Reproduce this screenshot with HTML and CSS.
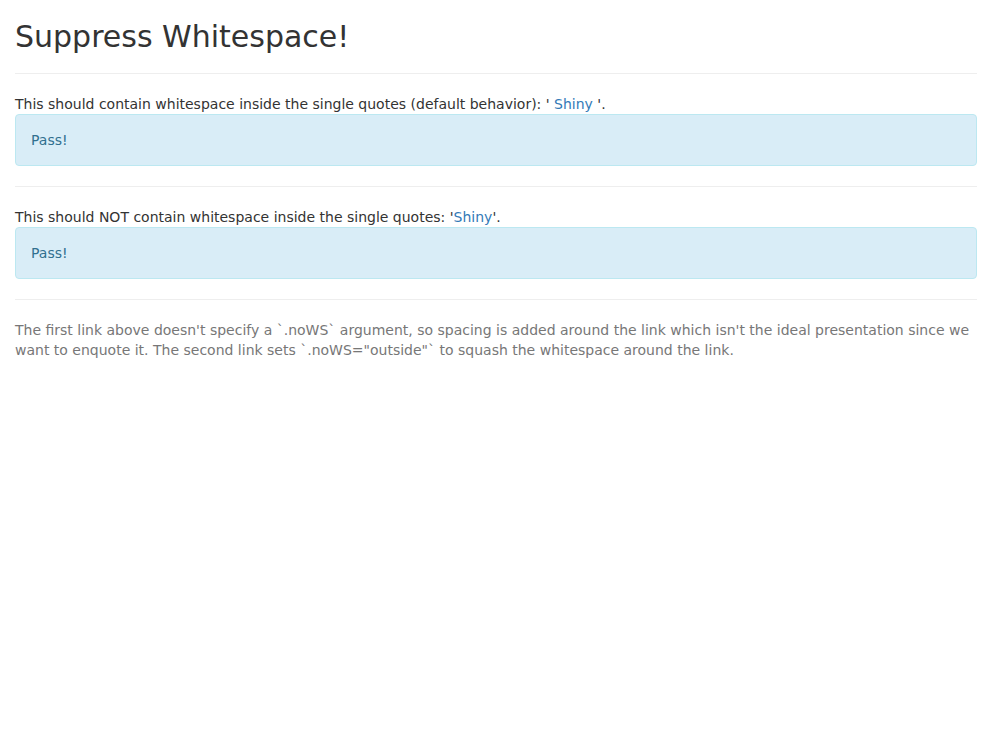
FILE: index.html
```html
<!DOCTYPE html>
<html>
<head>
<meta charset="utf-8">
<title>Suppress Whitespace!</title>
<link rel="stylesheet" href="styles.css">
</head>
<body>
<div class="container">
  <h2 class="title">Suppress Whitespace!</h2>
  <hr class="rule">
  <div class="line">This should contain whitespace inside the single quotes (default behavior): ' <a class="link" href="#">Shiny</a> '.</div>
  <div class="alert">Pass!</div>
  <hr class="rule">
  <div class="line">This should NOT contain whitespace inside the single quotes: '<a class="link" href="#">Shiny</a>'.</div>
  <div class="alert">Pass!</div>
  <hr class="rule">
  <p class="muted">The first link above doesn't specify a `.noWS` argument, so spacing is added around the link which isn't the ideal presentation since we want to enquote it. The second link sets `.noWS="outside"` to squash the whitespace around the link.</p>
</div>
</body>
</html>
```
FILE: styles.css
```css
html, body {
  margin: 0;
  padding: 0;
  background: #fff;
}
body {
  font-family: "DejaVu Sans", sans-serif;
  font-size: 14px;
  line-height: 20px;
  color: #333;
}
.container {
  padding: 0 15px;
}
.title {
  font-size: 30px;
  font-weight: 500;
  line-height: 33px;
  margin: 20px 0 10px;
  color: #333;
}
.rule {
  margin: 20px 0;
  border: 0;
  border-top: 1px solid #eee;
  height: 0;
}
.line {
  margin: 0;
}
.link {
  color: #337ab7;
  text-decoration: none;
}
.alert {
  padding: 15px;
  margin-bottom: 20px;
  border: 1px solid #bce8f1;
  border-radius: 4px;
  background: #d9edf7;
  color: #31708f;
}
.muted {
  margin: 0 0 10px;
  color: #777;
}
```
